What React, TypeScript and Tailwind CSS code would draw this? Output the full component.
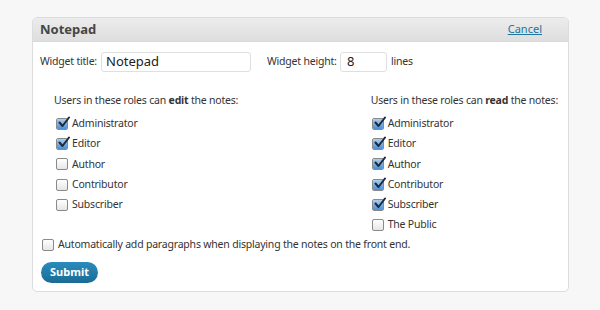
import React from "react";

function Box({ checked }: { checked: boolean }) {
  return (
    <span className="inline-flex w-[12px] h-[12px] shrink-0 rounded-[2px] border border-[#8a8a8a] bg-gradient-to-b from-[#ffffff] to-[#e6e6e6] items-center justify-center relative">
      {checked && (
        <>
          <span className="absolute inset-0 rounded-[1px] bg-gradient-to-b from-[#a9cdf0] to-[#4b8fd6]" />
          <svg viewBox="0 0 12 12" className="absolute left-[1px] top-[-3px] w-[12px] h-[12px]" >
            <path d="M1.5 6.5 L4.5 10 L11 1.5" fill="none" stroke="#1d2a3a" strokeWidth="2" strokeLinecap="round" strokeLinejoin="round" />
          </svg>
        </>
      )}
    </span>
  );
}

function Row({ label, checked }: { label: string; checked: boolean }) {
  return (
    <div className="flex items-center gap-[4px] h-[20.2px]">
      <Box checked={checked} />
      <span>{label}</span>
    </div>
  );
}

export default function App() {
  const edit: [string, boolean][] = [
    ["Administrator", true],
    ["Editor", true],
    ["Author", false],
    ["Contributor", false],
    ["Subscriber", false],
  ];
  const read: [string, boolean][] = [
    ["Administrator", true],
    ["Editor", true],
    ["Author", true],
    ["Contributor", true],
    ["Subscriber", true],
    ["The Public", false],
  ];
  return (
    <div
      className="w-[600px] h-[310px] bg-[#f7f7f7] pt-[17px] pl-[32px] text-[10.5px] tracking-[-0.2px] text-[#333] whitespace-nowrap"
      style={{ fontFamily: '"Noto Sans", sans-serif' }}
    >
      <div className="w-[537px] h-[275px] rounded-[5px] border border-[#dcdcdc] bg-white overflow-hidden">
        <div className="h-[24px] bg-gradient-to-b from-[#ececec] to-[#dedede] flex items-center justify-between pl-[7px] pr-[26px] border-b border-[#dadada]">
          <span className="font-bold text-[13px] tracking-normal text-[#464646]">Notepad</span>
          <span className="text-[#21759b] underline text-[11px] tracking-normal">Cancel</span>
        </div>
        <div className="px-[7px] pt-[10px]">
          <div className="flex items-center h-[20px]">
            <span className="w-[61px] shrink-0">Widget title:</span>
            <div className="w-[150px] shrink-0 h-[20px] rounded-[3px] border border-[#dfdfdf] flex items-center px-[4px] text-[13px] tracking-normal text-[#222]">Notepad</div>
            <span className="ml-[16px] w-[73px] shrink-0">Widget height:</span>
            <div className="w-[47px] shrink-0 h-[20px] rounded-[3px] border border-[#dfdfdf] flex items-center px-[6px] text-[13px] text-[#222]">8</div>
            <span className="ml-[4px]">lines</span>
          </div>
          <div className="flex justify-between pl-[14px] pr-[3px] mt-[18px]">
            <div>
              <div className="h-[20px] leading-[20px]">Users in these roles can <b>edit</b> the notes:</div>
              <div className="mt-[4px] pl-[2px]">
                {edit.map(([l, c]) => <Row key={l} label={l} checked={c} />)}
              </div>
            </div>
            <div>
              <div className="h-[20px] leading-[20px]">Users in these roles can <b>read</b> the notes:</div>
              <div className="mt-[4px] pl-[1px]">
                {read.map(([l, c]) => <Row key={l} label={l} checked={c} />)}
              </div>
            </div>
          </div>
          <div className="flex items-center gap-[4px] h-[20px] pl-[2px]">
            <Box checked={false} />
            <span>Automatically add paragraphs when displaying the notes on the front end.</span>
          </div>
          <div className="mt-[7px] pl-[1px]">
            <div className="inline-flex items-center justify-center w-[57px] h-[21px] rounded-full bg-gradient-to-b from-[#2a8bbd] to-[#1a6c95] text-white font-bold text-[11px] tracking-normal">Submit</div>
          </div>
        </div>
      </div>
    </div>
  );
}
